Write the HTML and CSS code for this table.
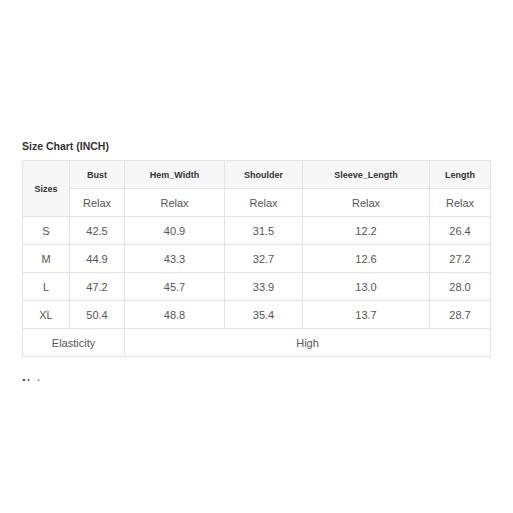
FILE: index.html
```html
<!DOCTYPE html>
<html>
<head>
<meta charset="utf-8">
<link rel="stylesheet" href="styles.css">
</head>
<body>
<div class="page">
  <h3 class="title">Size Chart (INCH)</h3>
  <table class="chart">
    <colgroup>
      <col class="c1"><col class="c2"><col class="c3"><col class="c4"><col class="c5"><col class="c6">
    </colgroup>
    <tr class="head">
      <th rowspan="2">Sizes</th>
      <th>Bust</th><th>Hem_Width</th><th>Shoulder</th><th>Sleeve_Length</th><th>Length</th>
    </tr>
    <tr>
      <td>Relax</td><td>Relax</td><td>Relax</td><td>Relax</td><td>Relax</td>
    </tr>
    <tr><td>S</td><td>42.5</td><td>40.9</td><td>31.5</td><td>12.2</td><td>26.4</td></tr>
    <tr><td>M</td><td>44.9</td><td>43.3</td><td>32.7</td><td>12.6</td><td>27.2</td></tr>
    <tr><td>L</td><td>47.2</td><td>45.7</td><td>33.9</td><td>13.0</td><td>28.0</td></tr>
    <tr><td>XL</td><td>50.4</td><td>48.8</td><td>35.4</td><td>13.7</td><td>28.7</td></tr>
    <tr><td colspan="2">Elasticity</td><td colspan="4">High</td></tr>
  </table>
  <div class="notes"><span>Notes</span></div>
</div>
</body>
</html>
```
FILE: styles.css
```css
html, body {
  margin: 0;
  padding: 0;
  background: #fff;
}
.page {
  padding: 139px 22px 0 22px;
  font-family: "Liberation Sans", Arial, sans-serif;
  color: #333;
}
.title {
  margin: 0 0 7px 0;
  font-size: 10.5px;
  line-height: 14px;
  font-weight: bold;
  color: #333;
}
.chart {
  width: 468px;
  border-collapse: collapse;
  table-layout: fixed;
}
.c1 { width: 47px; }
.c2 { width: 55px; }
.c3 { width: 100px; }
.c4 { width: 78px; }
.c5 { width: 127px; }
.c6 { width: 61px; }
.chart th,
.chart td {
  border: 1px solid #e3e3e3;
  height: 27px;
  padding: 0;
  text-align: center;
  vertical-align: middle;
  font-size: 11px;
  color: #555;
}
.chart th {
  background: #f7f7f7;
  font-weight: bold;
  font-size: 9px;
  color: #333;
}
.notes {
  margin-top: 22px;
  height: 2px;
  overflow: hidden;
  font-size: 11px;
  font-weight: bold;
  line-height: 11px;
  color: #555;
}
.notes span {
  display: block;
  margin-top: -1px;
}
```
